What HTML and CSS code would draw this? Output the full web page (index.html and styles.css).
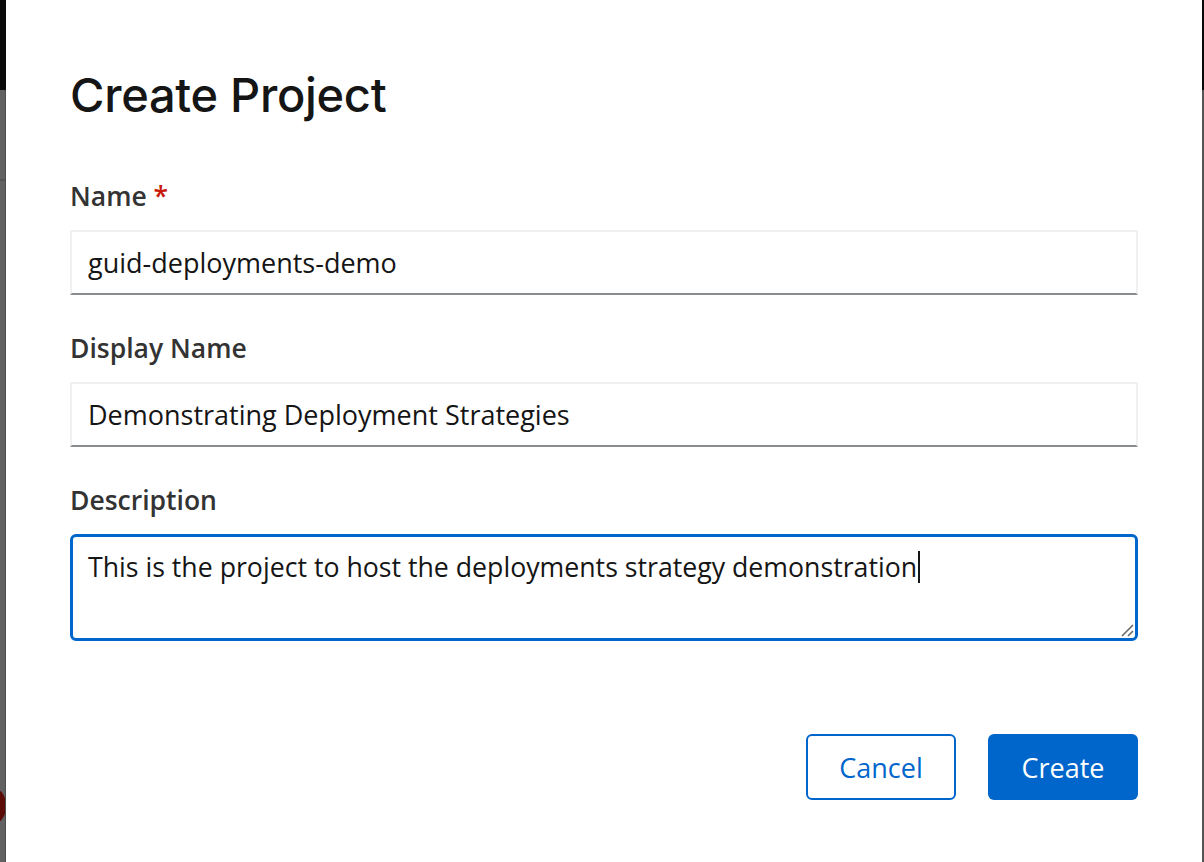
FILE: index.html
```html
<!DOCTYPE html>
<html lang="en">
<head>
<meta charset="utf-8">
<title>Create Project</title>
<link rel="stylesheet" href="styles.css">
</head>
<body>
<div class="screen">
  <div class="backdrop backdrop-left">
    <div class="bd-top"></div>
    <div class="bd-rest"><span class="bd-dot"></span></div>
  </div>
  <div class="modal">
    <h1 class="title">Create Project</h1>
    <form class="form">
      <div class="group">
        <label class="label">Name <span class="req">*</span></label>
        <div class="input">guid-deployments-demo</div>
      </div>
      <div class="group">
        <label class="label">Display Name</label>
        <div class="input">Demonstrating Deployment Strategies</div>
      </div>
      <div class="group">
        <label class="label">Description</label>
        <div class="textarea">This is the project to host the deployments strategy demonstration<span class="caret"></span>
          <svg class="grip" width="14" height="14" viewBox="0 0 14 14"><path d="M2 13 L13 2 M8 13 L13 8" stroke="#6a6a6a" stroke-width="1.6" fill="none"/></svg>
        </div>
      </div>
    </form>
    <div class="footer">
      <button class="btn btn-secondary" type="button">Cancel</button>
      <button class="btn btn-primary" type="button">Create</button>
    </div>
  </div>
  <div class="backdrop backdrop-right">
    <div class="bd-top"></div>
    <div class="bd-rest"></div>
  </div>
</div>
</body>
</html>
```
FILE: styles.css
```css
html, body {
  margin: 0;
  padding: 0;
  background: #ffffff;
}
body {
  font-family: "Open Sans", "Liberation Sans", sans-serif;
  color: #151515;
}
.screen {
  display: flex;
  width: 1204px;
  height: 862px;
  overflow: hidden;
}
.backdrop {
  display: flex;
  flex-direction: column;
  flex: none;
}
.backdrop-left { width: 6px; }
.backdrop-right { width: 2px; }
.bd-top {
  height: 90px;
  background: #0a0a0a;
}
.bd-rest {
  flex: 1;
  background: #616161;
  position: relative;
  overflow: hidden;
}
.backdrop-left .bd-rest {
  border-right: 1px solid #4e4e4e;
  background: linear-gradient(#616161 0 89px, #545454 89px 91px, #616161 91px);
}
.backdrop-right .bd-rest { background: #555555; }
.bd-dot {
  position: absolute;
  left: -12px;
  top: 700px;
  width: 18px;
  height: 32px;
  border-radius: 50%;
  background: #5c0a06;
}
.modal {
  flex: 1;
  padding: 69px 64px 0 64px;
  background: #fff;
}
.title {
  margin: 0;
  font-family: "Inter", "Open Sans", sans-serif;
  font-size: 47px;
  font-weight: 500;
  line-height: 52px;
  color: #151515;
  letter-spacing: -0.3px;
}
.form {
  margin-top: 59px;
  display: flex;
  flex-direction: column;
  gap: 37px;
}
.group {
  display: flex;
  flex-direction: column;
  gap: 18px;
}
.label {
  font-size: 26.5px;
  font-weight: 600;
  line-height: 32px;
  color: #333;
}
.req {
  color: #c9190b;
}
.input {
  height: 65px;
  box-sizing: border-box;
  border: 2px solid #f0f0f0;
  border-bottom-color: #8a8d90;
  padding: 0 16px;
  display: flex;
  align-items: center;
  font-size: 27px;
  color: #151515;
}
.textarea {
  position: relative;
  height: 107px;
  box-sizing: border-box;
  border: 3px solid #0066cc;
  border-radius: 6px;
  padding: 10px 15px;
  font-size: 26.7px;
  line-height: 40px;
  color: #151515;
}
.caret {
  display: inline-block;
  width: 2px;
  height: 32px;
  background: #151515;
  vertical-align: -6px;
  margin-left: 1px;
}
.grip {
  position: absolute;
  right: 1px;
  bottom: 1px;
}
.footer {
  margin-top: 93px;
  display: flex;
  justify-content: flex-end;
  gap: 32px;
}
.btn {
  width: 150px;
  height: 66px;
  border-radius: 6px;
  font-family: inherit;
  font-size: 27px;
  padding: 0;
  cursor: pointer;
}
.btn-secondary {
  background: #fff;
  color: #0066cc;
  border: 2px solid #0066cc;
}
.btn-primary {
  background: #0066cc;
  color: #fff;
  border: none;
}
```
